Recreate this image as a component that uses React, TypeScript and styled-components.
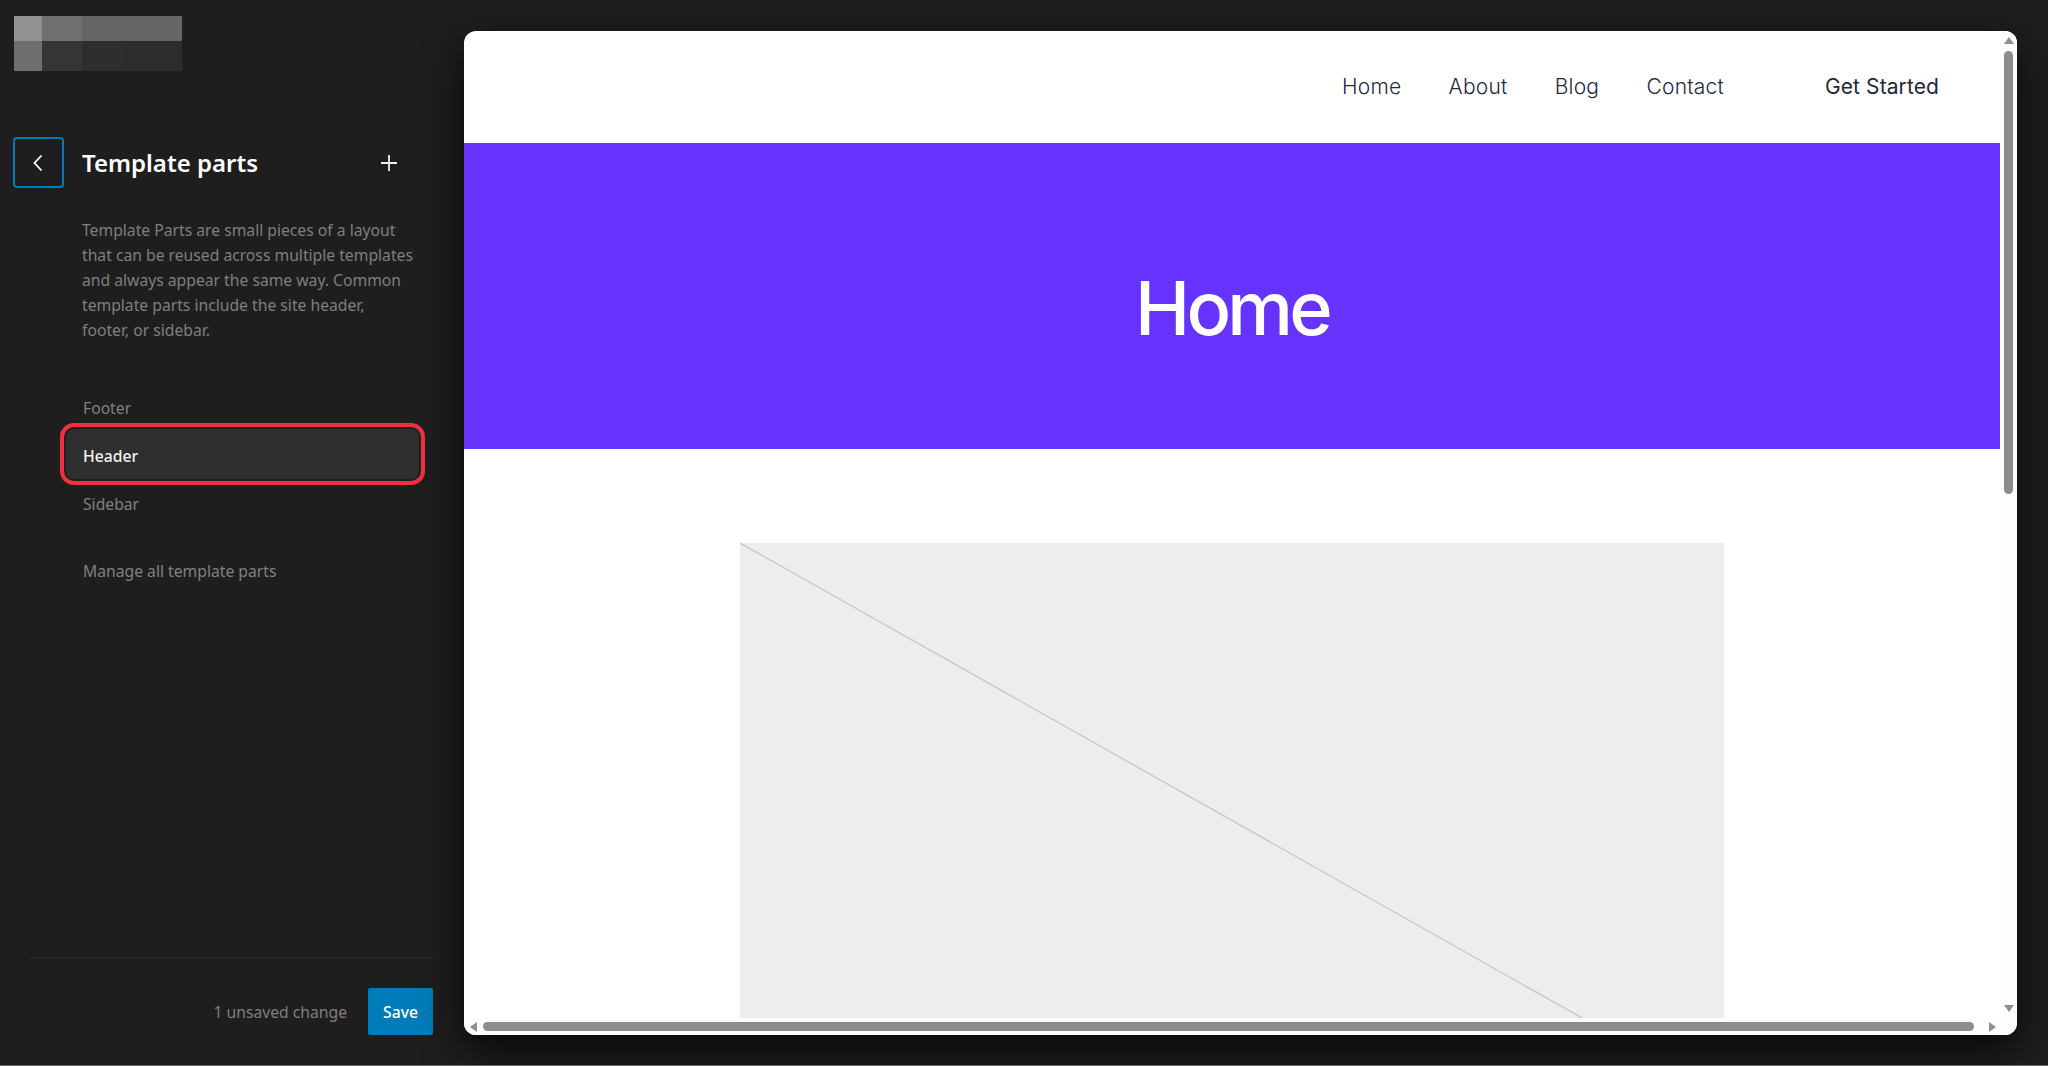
import React from "react";
import styled, { createGlobalStyle } from "styled-components";

const GlobalStyle = createGlobalStyle`
  html, body {
    margin: 0;
    padding: 0;
    background: #1e1e1e;
  }
  * {
    box-sizing: border-box;
  }
`;

const Page = styled.div`
  width: 2048px;
  height: 1066px;
  display: flex;
  overflow: hidden;
  padding: 31px 31px 30px 0;
  background: #1e1e1e;
  border-bottom: 1px solid #6a6a6a;
  font-family: "Noto Sans", sans-serif;
`;

const Sidebar = styled.aside`
  width: 464px;
  margin-top: -31px;
  flex-shrink: 0;
  display: flex;
  flex-direction: column;
`;

const Logo = styled.div`
  width: 168px;
  height: 55px;
  margin: 16px 0 0 14px;
  display: grid;
  grid-template-columns: 28px 40px 42px 58px;
  grid-template-rows: 25px 30px;
`;

const LogoCell = styled.div<{ $color: string }>`
  background: ${({ $color }) => $color};
`;

const TitleRow = styled.div`
  display: flex;
  align-items: center;
  margin: 66px 0 0 13px;
  height: 51px;
`;

const BackButton = styled.button`
  width: 51px;
  height: 51px;
  padding: 0 1px 0 0;
  display: flex;
  align-items: center;
  justify-content: center;
  background: transparent;
  border: 2px solid #007cba;
  border-radius: 4px;
`;

const Title = styled.h1`
  margin: 0 0 0 18px;
  width: 298px;
  font-size: 24px;
  line-height: 34px;
  font-weight: 600;
  color: #fff;
`;

const PlusButton = styled.span`
  display: flex;
`;

const Description = styled.p`
  margin: 30px 0 0 82px;
  width: 332px;
  font-size: 15.7px;
  line-height: 25px;
  color: #7f7f7f;
`;

const PartList = styled.ul`
  list-style: none;
  margin: 41px 0 0 60px;
  padding: 0;
  width: 365px;
`;

const PartItem = styled.li<{ $active?: boolean }>`
  height: 48px;
  display: flex;
  align-items: center;
  padding-left: 23px;
  font-size: 15.7px;
  color: #808080;
  ${({ $active }) =>
    $active &&
    `
    height: 62px;
    margin: -9px 0 -5px;
    padding: 3px 0 0 19px;
    color: #f2f2f2;
    font-weight: 500;
    border: 4px solid #f0303f;
    border-radius: 14px;
    background: #2f2f2f;
    box-shadow: inset 0 0 0 2px #1f1f1f;
  `}
`;

const ManageLink = styled.a`
  margin: 31px 0 0 83px;
  font-size: 15.7px;
  line-height: 24px;
  color: #808080;
`;

const SaveFooter = styled.div`
  margin: auto 0 0 30px;
  width: 403px;
  border-top: 1px solid #2b2b2b;
  padding-top: 30px;
  display: flex;
  justify-content: flex-end;
  align-items: center;
  gap: 21px;
`;

const UnsavedText = styled.span`
  font-size: 15.7px;
  color: #7f7f7f;
`;

const SaveButton = styled.button`
  width: 65px;
  height: 47px;
  padding: 0;
  border: 0;
  border-radius: 2px;
  background: #007cba;
  color: #fff;
  font-family: inherit;
  font-size: 15.7px;
  font-weight: 500;
`;

const Frame = styled.main`
  flex: 1;
  min-width: 0;
  display: flex;
  flex-direction: column;
  background: #fff;
  border-radius: 12px;
  overflow: hidden;
  box-shadow: 0 16px 40px rgba(0, 0, 0, 0.75);
`;

const FrameBody = styled.div`
  flex: 1;
  min-height: 0;
  display: flex;
`;

const Viewport = styled.div`
  width: 1536px;
  overflow: hidden;
`;

const SiteHeader = styled.header`
  height: 112px;
  display: flex;
  align-items: center;
  justify-content: flex-end;
  padding: 0 61px 2px 0;
  font-family: Inter, sans-serif;
  font-size: 21px;
  color: #1f2a44;
`;

const NavList = styled.nav`
  display: flex;
  gap: 47.3px;
  margin-right: 101px;
`;

const NavLink = styled.a`
  letter-spacing: 0.2px;
  font-weight: 300;
`;

const CtaLink = styled.a`
  font-weight: 400;
  letter-spacing: 0.1px;
  color: #22283a;
`;

const Hero = styled.section`
  height: 306px;
  display: flex;
  align-items: center;
  justify-content: center;
  background: #6633fc;
  padding-top: 24px;
`;

const HeroTitle = styled.h2`
  margin: 0;
  font-family: Inter, sans-serif;
  font-size: 74px;
  line-height: 90px;
  font-weight: 500;
  letter-spacing: -3.8px;
  color: #fff;
`;

const Placeholder = styled.div`
  width: 984px;
  height: 555px;
  margin: 94px auto 0;
  background: #ecedef;
`;

const PlaceholderLine = styled.svg`
  display: block;
  width: 100%;
  height: 100%;
`;

const VScroll = styled.div`
  flex: 1;
  display: flex;
  flex-direction: column;
  align-items: center;
  background: #fdfdfd;
  padding-top: 6px;
  position: relative;
`;

const VThumb = styled.div`
  width: 9px;
  height: 443px;
  margin-top: 7px;
  border-radius: 5px;
  background: #8c8c8c;
`;

const VDownArrow = styled.span`
  margin-top: auto;
  display: flex;
  margin-bottom: 6px;
`;

const HScroll = styled.div`
  height: 17px;
  display: flex;
  align-items: center;
  padding: 0 0 0 6px;
  background: #fdfdfd;
`;

const HThumb = styled.div`
  width: 1491px;
  height: 9px;
  margin-left: 6px;
  border-radius: 5px;
  background: #8c8c8c;
`;

const HRightArrow = styled.span`
  display: flex;
  margin-left: 15px;
`;

const Arrow = styled.svg`
  display: block;
  fill: #8f8f8f;
`;

const logoCells = ["#919191", "#707070", "#666666", "#666666", "#6e6e6e", "#333635", "#2e2e2e", "#2c2c2c"];

const parts = [
  { label: "Footer" },
  { label: "Header", active: true },
  { label: "Sidebar" },
];

export default function App() {
  return (
    <>
      <GlobalStyle />
      <Page>
        <Sidebar>
          <Logo>
            {logoCells.map((color, i) => (
              <LogoCell key={i} $color={color} />
            ))}
          </Logo>
          <TitleRow>
            <BackButton aria-label="Back">
              <svg width="16" height="18" viewBox="0 0 16 18" fill="none">
                <path d="M11.5 1.5 L4.5 9 L11.5 16.5" stroke="#fff" strokeWidth="1.8" />
              </svg>
            </BackButton>
            <Title>Template parts</Title>
            <PlusButton>
              <svg width="18" height="18" viewBox="0 0 18 18" fill="none">
                <path d="M9 1 V17 M1 9 H17" stroke="#f0f0f0" strokeWidth="1.8" />
              </svg>
            </PlusButton>
          </TitleRow>
          <Description>
            Template Parts are small pieces of a layout that can be reused across multiple templates and always appear the same way. Common template parts include the site header, footer, or sidebar.
          </Description>
          <PartList>
            {parts.map((part) => (
              <PartItem key={part.label} $active={part.active}>
                {part.label}
              </PartItem>
            ))}
          </PartList>
          <ManageLink>Manage all template parts</ManageLink>
          <SaveFooter>
            <UnsavedText>1 unsaved change</UnsavedText>
            <SaveButton>Save</SaveButton>
          </SaveFooter>
        </Sidebar>
        <Frame>
          <FrameBody>
            <Viewport>
              <SiteHeader>
                <NavList>
                  <NavLink>Home</NavLink>
                  <NavLink>About</NavLink>
                  <NavLink>Blog</NavLink>
                  <NavLink>Contact</NavLink>
                </NavList>
                <CtaLink>Get Started</CtaLink>
              </SiteHeader>
              <Hero>
                <HeroTitle>Home</HeroTitle>
              </Hero>
              <Placeholder>
                <PlaceholderLine viewBox="0 0 984 555" preserveAspectRatio="none">
                  <line x1="0" y1="0" x2="984" y2="555" stroke="#c4c5c8" strokeWidth="1.2" />
                </PlaceholderLine>
              </Placeholder>
            </Viewport>
            <VScroll>
              <Arrow width="10" height="7" viewBox="0 0 10 7">
                <path d="M5 0 L10 7 H0 Z" />
              </Arrow>
              <VThumb />
              <VDownArrow>
                <Arrow width="10" height="7" viewBox="0 0 10 7">
                  <path d="M0 0 H10 L5 7 Z" />
                </Arrow>
              </VDownArrow>
            </VScroll>
          </FrameBody>
          <HScroll>
            <Arrow width="7" height="10" viewBox="0 0 7 10">
              <path d="M7 0 V10 L0 5 Z" />
            </Arrow>
            <HThumb />
            <HRightArrow>
              <Arrow width="7" height="10" viewBox="0 0 7 10">
                <path d="M0 0 L7 5 L0 10 Z" />
              </Arrow>
            </HRightArrow>
          </HScroll>
        </Frame>
      </Page>
    </>
  );
}
